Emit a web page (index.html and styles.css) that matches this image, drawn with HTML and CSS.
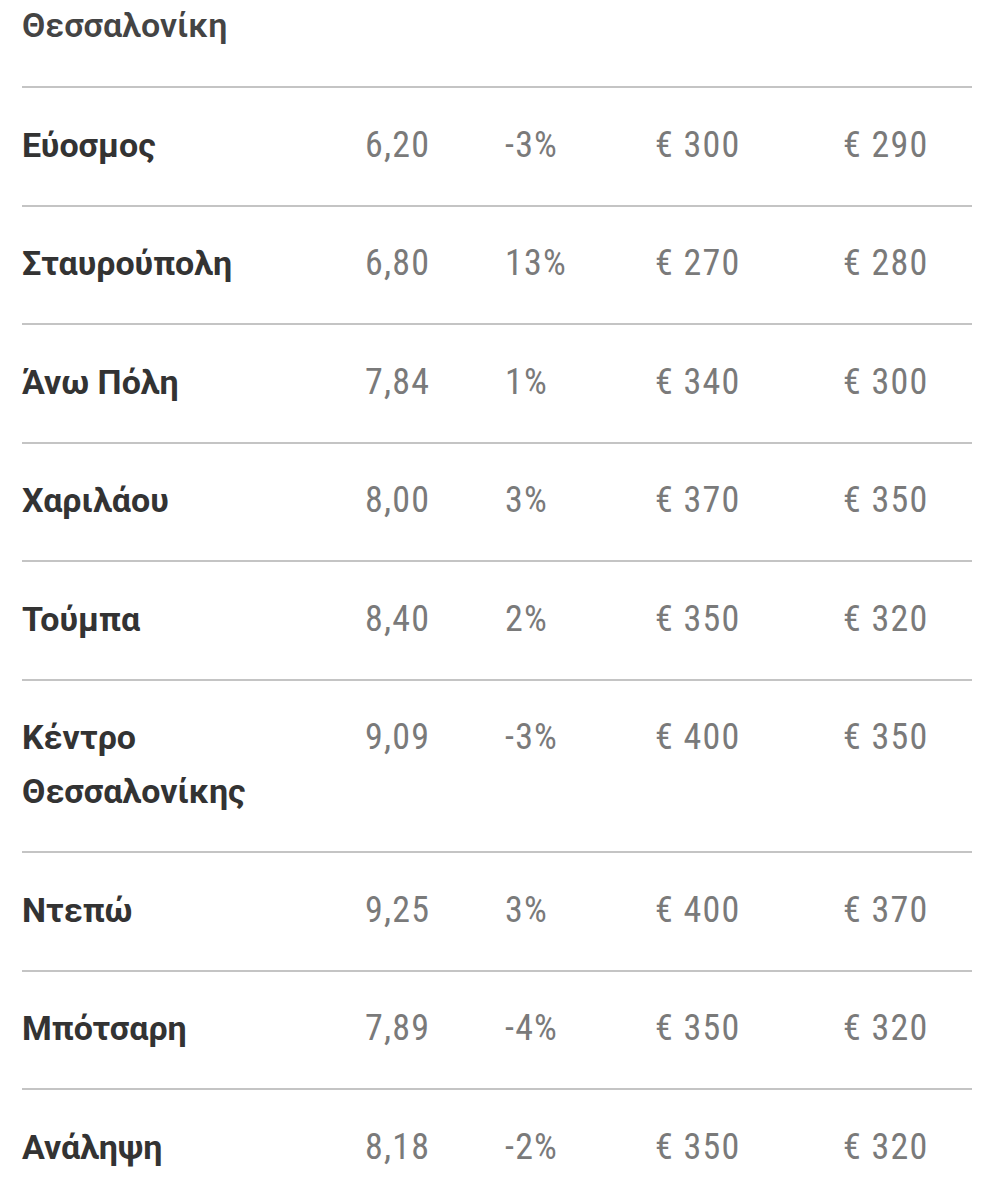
FILE: index.html
```html
<!DOCTYPE html>
<html lang="el">
<head>
<meta charset="utf-8">
<link rel="stylesheet" href="styles.css">
</head>
<body>
<table class="rent-table">
  <colgroup>
    <col class="col-name">
    <col class="col-yield">
    <col class="col-change">
    <col class="col-price">
    <col class="col-prev">
  </colgroup>
  <thead>
    <tr class="head-row">
      <th class="name">Θεσσαλονίκη</th>
      <th></th><th></th><th></th><th></th>
    </tr>
  </thead>
  <tbody>
    <tr><td class="name">Εύοσμος</td><td class="num">6,20</td><td class="num">-3%</td><td class="num">€ 300</td><td class="num">€ 290</td></tr>
    <tr><td class="name">Σταυρούπολη</td><td class="num">6,80</td><td class="num">13%</td><td class="num">€ 270</td><td class="num">€ 280</td></tr>
    <tr><td class="name">Άνω Πόλη</td><td class="num">7,84</td><td class="num">1%</td><td class="num">€ 340</td><td class="num">€ 300</td></tr>
    <tr><td class="name">Χαριλάου</td><td class="num">8,00</td><td class="num">3%</td><td class="num">€ 370</td><td class="num">€ 350</td></tr>
    <tr><td class="name">Τούμπα</td><td class="num">8,40</td><td class="num">2%</td><td class="num">€ 350</td><td class="num">€ 320</td></tr>
    <tr><td class="name">Κέντρο<br>Θεσσαλονίκης</td><td class="num">9,09</td><td class="num">-3%</td><td class="num">€ 400</td><td class="num">€ 350</td></tr>
    <tr><td class="name">Ντεπώ</td><td class="num">9,25</td><td class="num">3%</td><td class="num">€ 400</td><td class="num">€ 370</td></tr>
    <tr><td class="name">Μπότσαρη</td><td class="num">7,89</td><td class="num">-4%</td><td class="num">€ 350</td><td class="num">€ 320</td></tr>
    <tr class="last"><td class="name">Ανάληψη</td><td class="num">8,18</td><td class="num">-2%</td><td class="num">€ 350</td><td class="num">€ 320</td></tr>
  </tbody>
</table>
</body>
</html>
```

FILE: styles.css
```css
html, body {
  margin: 0;
  padding: 0;
  background: #ffffff;
}

body {
  padding: 0 10px 0 22px;
  font-family: Roboto, "Noto Sans", sans-serif;
}

.rent-table {
  width: 950px;
  border-collapse: collapse;
  table-layout: fixed;
  margin-top: -2px;
}

.col-name { width: 343px; }
.col-yield { width: 140px; }
.col-change { width: 150px; }
.col-price { width: 188px; }
.col-prev { width: 129px; }

.rent-table th,
.rent-table td {
  padding: 29.5px 0 33px 0;
  line-height: 54px;
  vertical-align: top;
  text-align: left;
  border-bottom: 2px solid #c4c4c4;
}

.rent-table .head-row th {
  padding-top: 0;
  padding-bottom: 34px;
}

.rent-table tr.last td {
  border-bottom: none;
}

.name {
  font-size: 34px;
  font-weight: 700;
  color: #333333;
}

.head-row .name {
  font-weight: 600;
  color: #444444;
}

.num {
  font-family: "Roboto Condensed", Roboto, sans-serif;
  font-stretch: condensed;
  font-size: 36px;
  font-weight: 400;
  letter-spacing: 1.2px;
  color: #7a7a7a;
}
```
